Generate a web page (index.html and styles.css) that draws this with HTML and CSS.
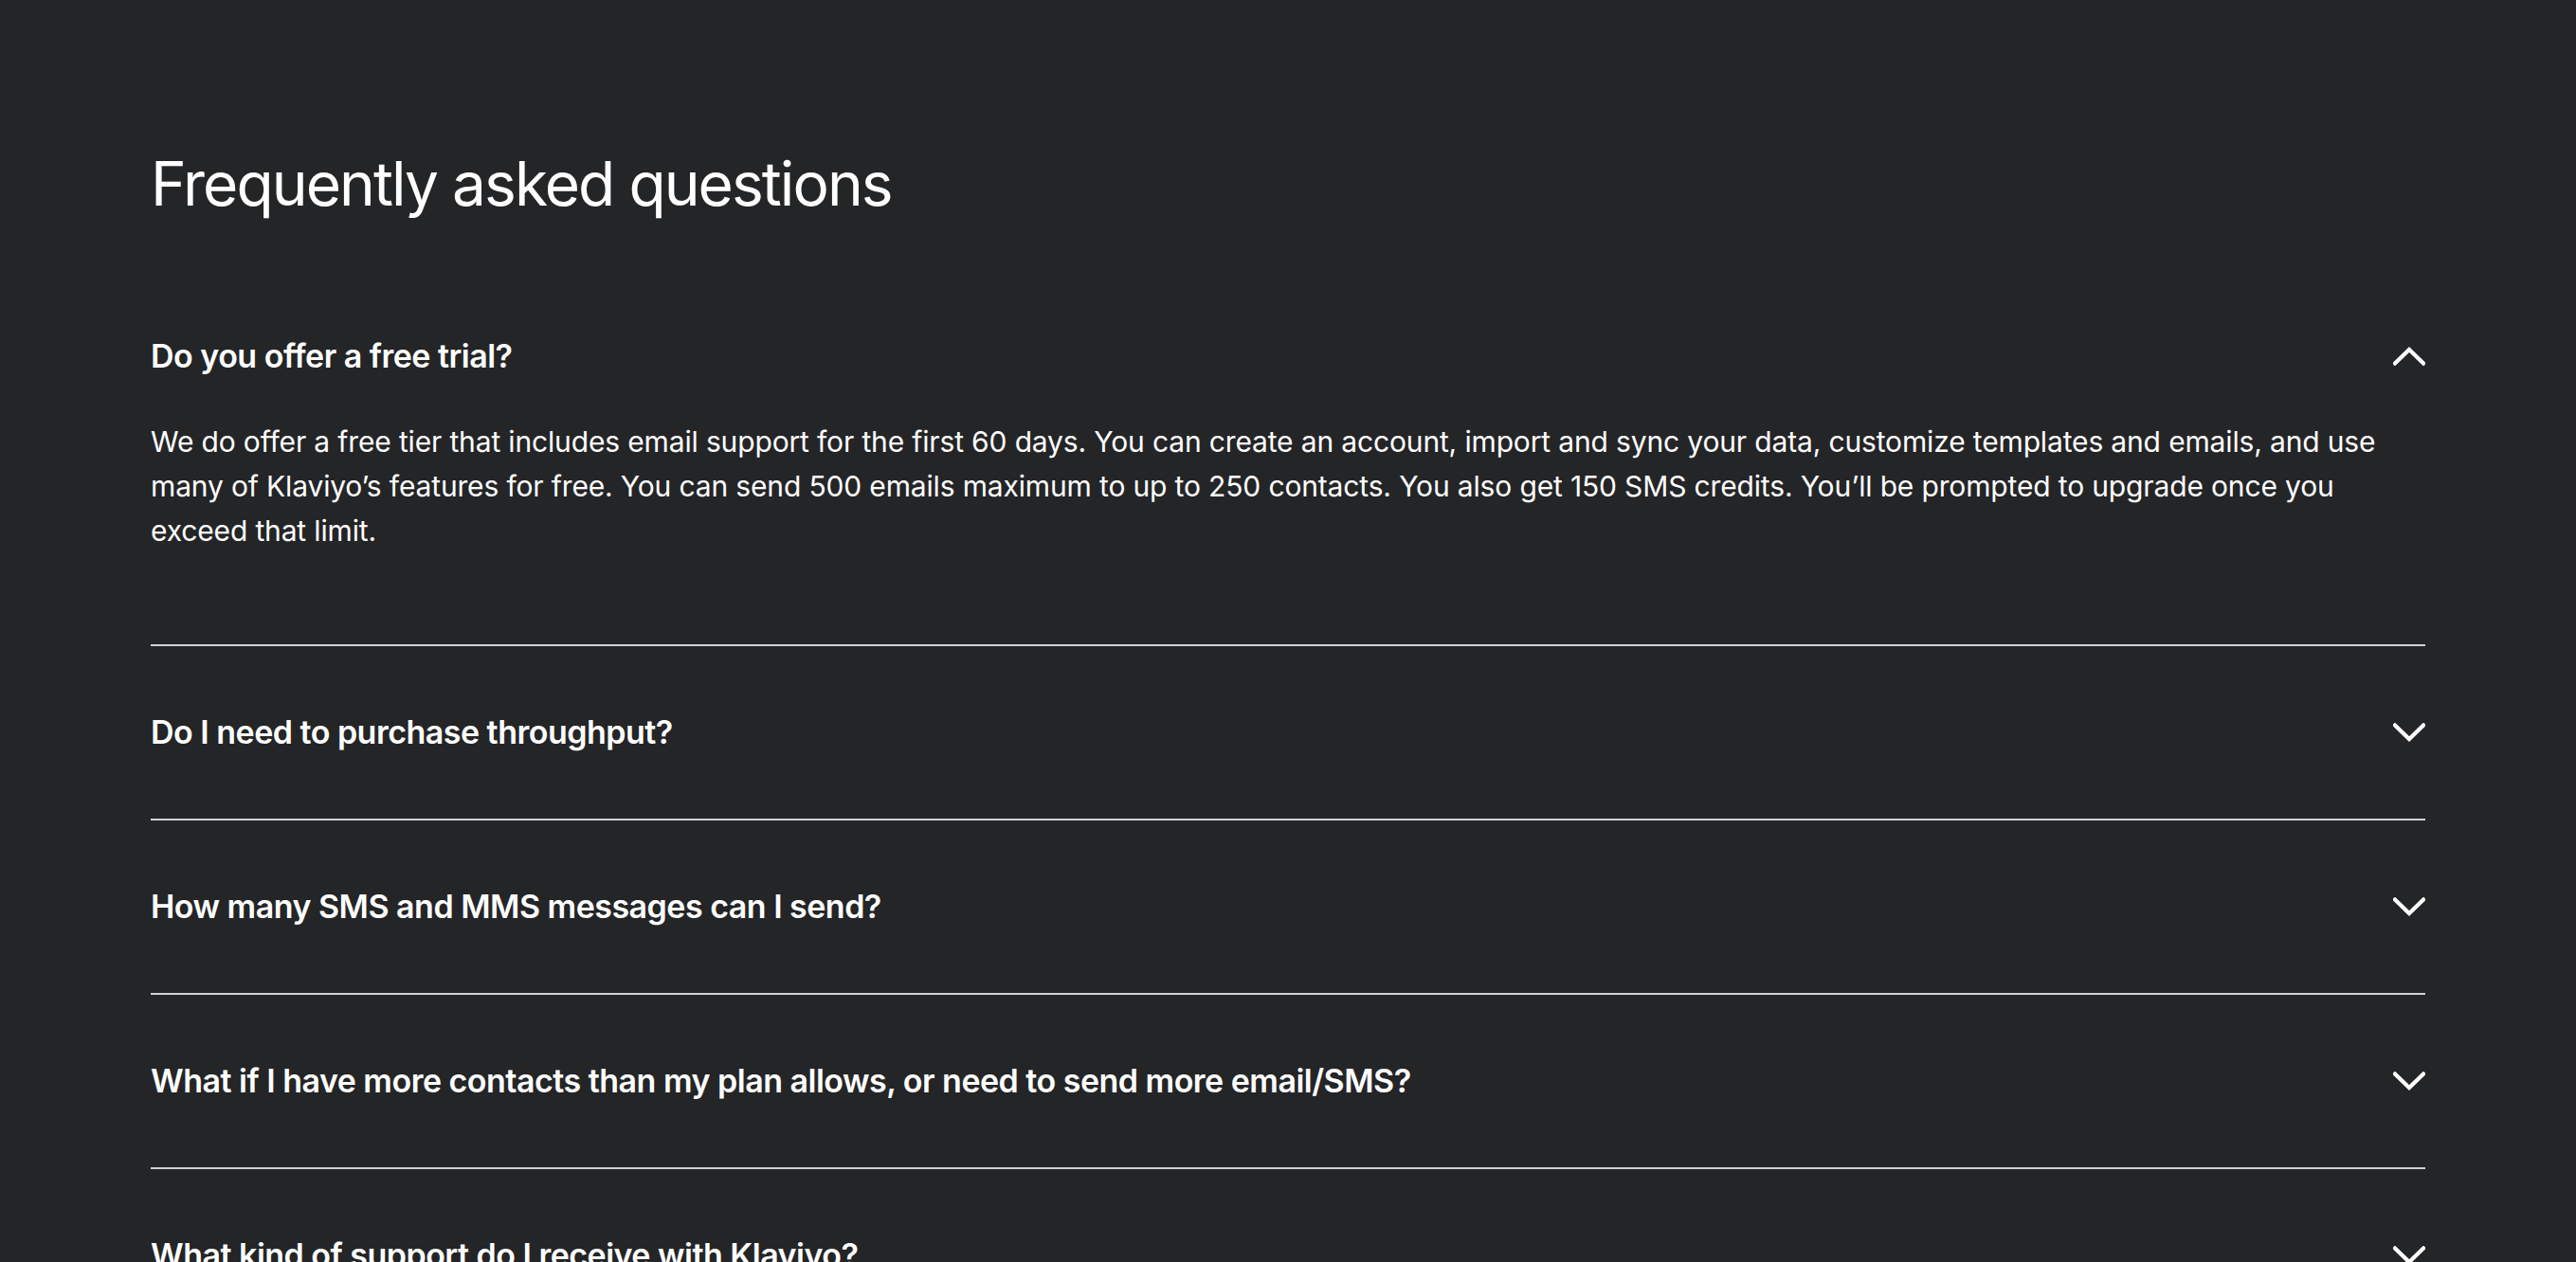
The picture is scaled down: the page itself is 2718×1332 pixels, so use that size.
FILE: index.html
```html
<!DOCTYPE html>
<html lang="en">
<head>
<meta charset="utf-8">
<title>Frequently asked questions</title>
<link rel="stylesheet" href="styles.css">
</head>
<body>
<section class="faq">
  <h2 class="faq-title">Frequently asked questions</h2>
  <div class="faq-list">
    <div class="faq-item is-open">
      <button class="faq-q" type="button" aria-expanded="true">
        <span class="faq-q-text">Do you offer a free trial?</span>
        <svg class="chev" width="34" height="20" viewBox="0 0 34 20" aria-hidden="true"><polyline points="2,17.5 17,3 32,17.5"/></svg>
      </button>
      <div class="faq-a">
        <p>We do offer a free tier that includes email support for the first 60 days. You can create an account, import and sync your data, customize templates and emails, and use many of Klaviyo’s features for free. You can send 500 emails maximum to up to 250 contacts. You also get 150 SMS credits. You’ll be prompted to upgrade once you exceed that limit.</p>
      </div>
    </div>
    <div class="faq-item">
      <button class="faq-q" type="button" aria-expanded="false">
        <span class="faq-q-text">Do I need to purchase throughput?</span>
        <svg class="chev" width="34" height="20" viewBox="0 0 34 20" aria-hidden="true"><polyline points="2,2.5 17,17 32,2.5"/></svg>
      </button>
    </div>
    <div class="faq-item">
      <button class="faq-q" type="button" aria-expanded="false">
        <span class="faq-q-text">How many SMS and MMS messages can I send?</span>
        <svg class="chev" width="34" height="20" viewBox="0 0 34 20" aria-hidden="true"><polyline points="2,2.5 17,17 32,2.5"/></svg>
      </button>
    </div>
    <div class="faq-item">
      <button class="faq-q" type="button" aria-expanded="false">
        <span class="faq-q-text">What if I have more contacts than my plan allows, or need to send more email/SMS?</span>
        <svg class="chev" width="34" height="20" viewBox="0 0 34 20" aria-hidden="true"><polyline points="2,2.5 17,17 32,2.5"/></svg>
      </button>
    </div>
    <div class="faq-item">
      <button class="faq-q" type="button" aria-expanded="false">
        <span class="faq-q-text">What kind of support do I receive with Klaviyo?</span>
        <svg class="chev" width="34" height="20" viewBox="0 0 34 20" aria-hidden="true"><polyline points="2,2.5 17,17 32,2.5"/></svg>
      </button>
    </div>
  </div>
</section>
</body>
</html>
```

FILE: styles.css
```css
html, body {
  margin: 0;
  padding: 0;
  background: #242527;
  color: #ffffff;
  font-family: Inter, "Noto Sans", "Liberation Sans", sans-serif;
}

.faq {
  max-width: 2400px;
  margin: 0 auto;
  padding-top: 155px;
  padding-bottom: 200px;
}

.faq-title {
  margin: 0;
  font-size: 64px;
  line-height: 77px;
  font-weight: 400;
  letter-spacing: -0.03em;
}

.faq-list {
  margin-top: 53px;
}

.faq-item + .faq-item {
  border-top: 2px solid #d2d2d2;
}

.faq-q {
  display: flex;
  width: 100%;
  align-items: center;
  justify-content: space-between;
  gap: 40px;
  padding: 70px 0;
  margin: 0;
  border: 0;
  background: none;
  color: inherit;
  font: inherit;
  text-align: left;
  cursor: pointer;
}

.faq-q-text {
  font-size: 34px;
  line-height: 42px;
  font-weight: 600;
  letter-spacing: -0.015em;
}

.chev {
  flex: none;
  display: block;
}

.chev polyline {
  fill: none;
  stroke: #ffffff;
  stroke-width: 4.2;
  stroke-linecap: square;
  stroke-linejoin: miter;
}

.faq-item.is-open .faq-q {
  padding-bottom: 46px;
}

.faq-a {
  padding-bottom: 96px;
}

.faq-a p {
  margin: 0;
  font-size: 30px;
  line-height: 47px;
  font-weight: 400;
  letter-spacing: -0.005em;
  padding-right: 40px;
}
```
